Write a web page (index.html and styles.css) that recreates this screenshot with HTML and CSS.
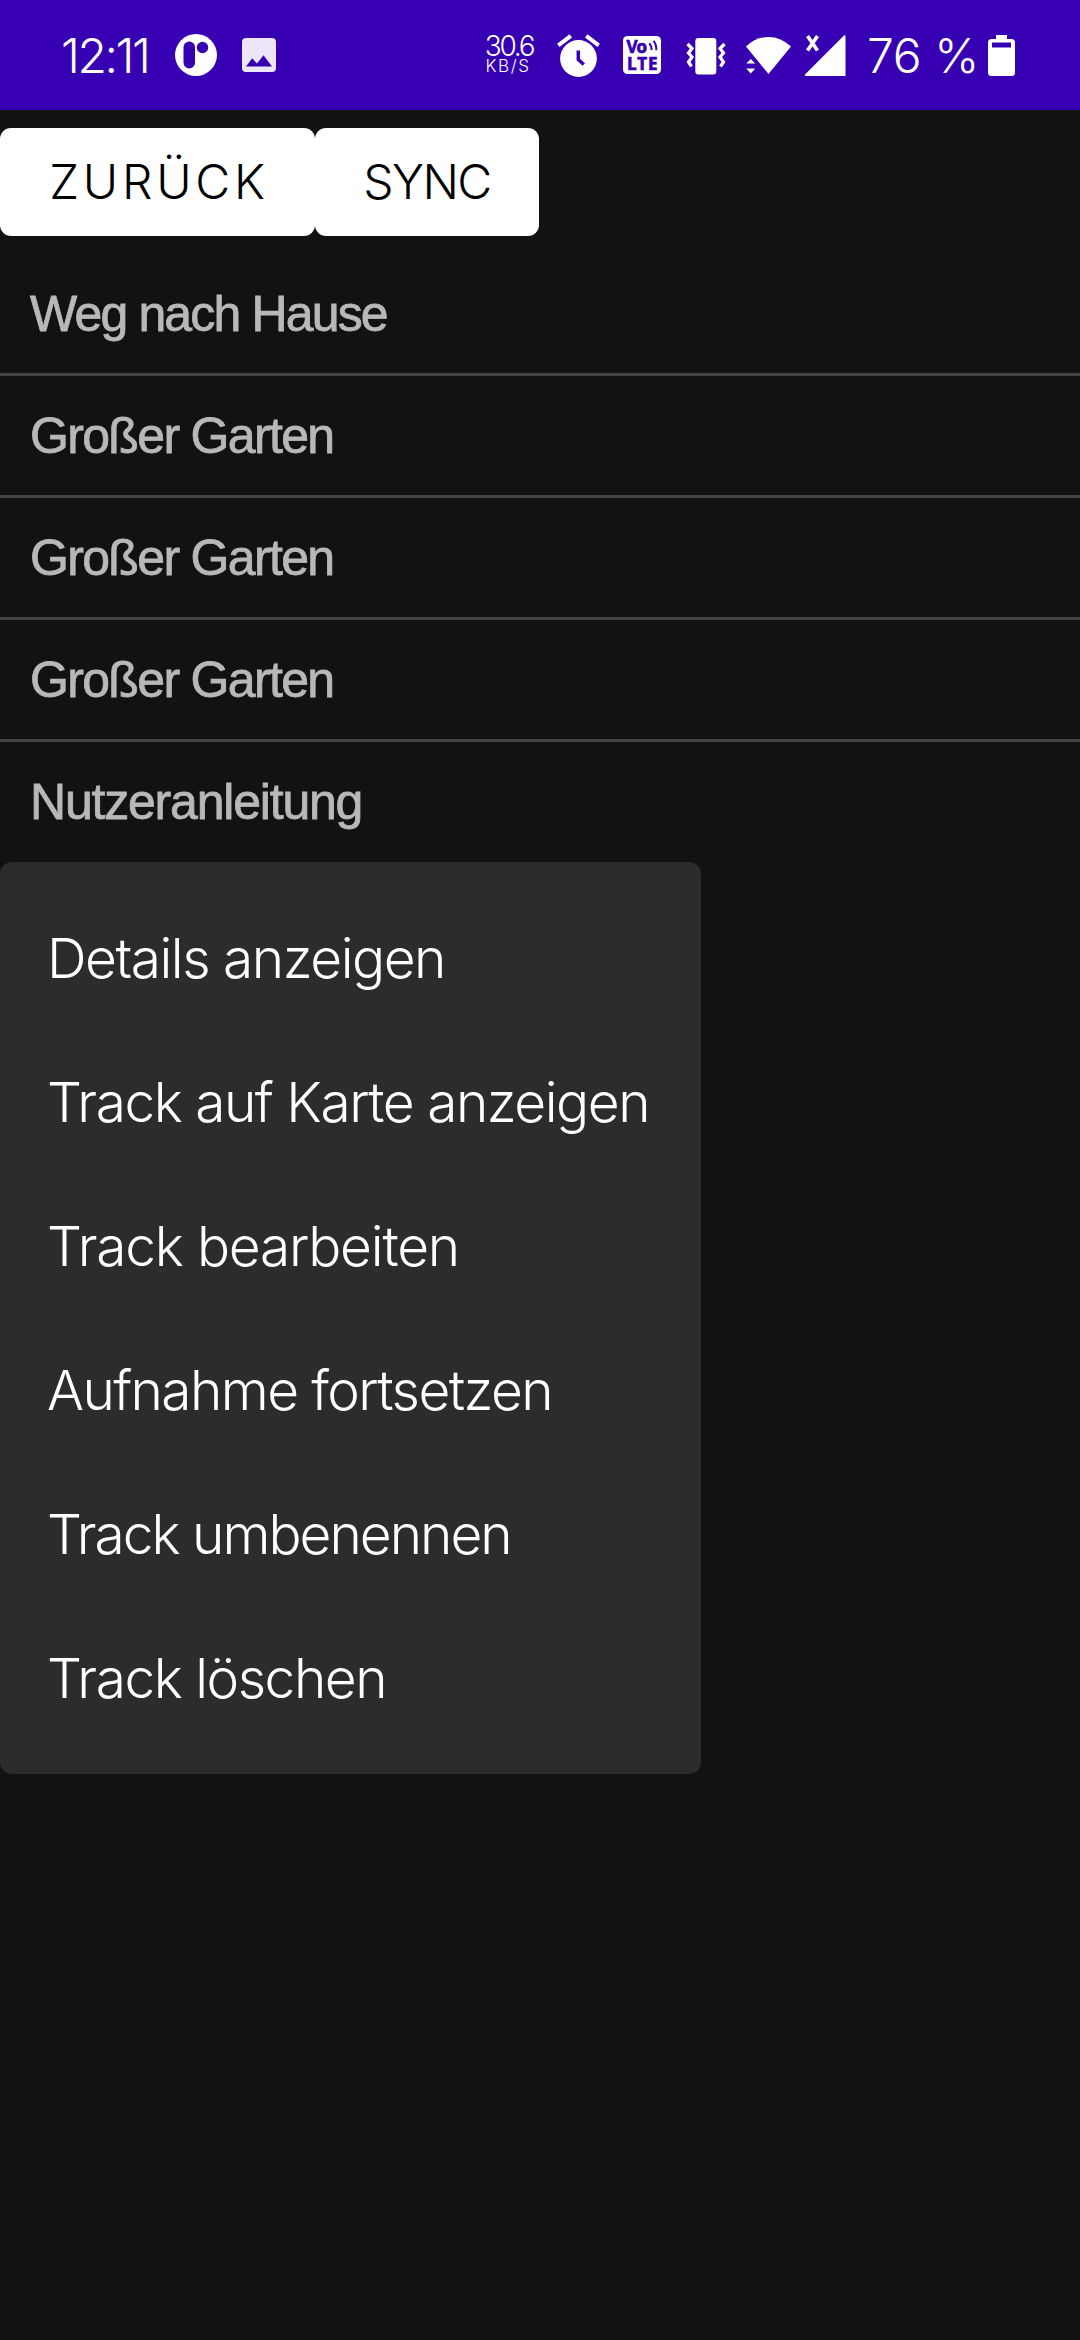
FILE: index.html
```
<!DOCTYPE html>
<html lang="de">
<head>
<meta charset="utf-8">
<title>Tracks</title>
<link rel="stylesheet" href="styles.css">
</head>
<body>
<header class="status-bar">
  <span class="clock">12:11</span>
  <svg class="icon icon-app" width="42" height="42" viewBox="0 0 42 42"><circle cx="21" cy="21" r="21" fill="#fff"/><rect x="8.5" y="7.5" width="11.5" height="27" rx="5.75" fill="#3700b3"/><circle cx="27.5" cy="13.5" r="5.7" fill="#3700b3"/></svg>
  <svg class="icon icon-image" width="34" height="34" viewBox="0 0 34 34"><path fill="#ece6f8" fill-rule="evenodd" d="M4 0H30Q34 0 34 4V30Q34 34 30 34H4Q0 34 0 30V4Q0 0 4 0ZM4 28.5H30L21.5 17.3L15 25.5L10.2 20.2Z"/></svg>
  <span class="net"><span class="net-value">30.6</span><span class="net-unit">KB/S</span></span>
  <svg class="icon icon-alarm" width="43" height="43" viewBox="0 0 43 43"><circle cx="21.5" cy="24.5" r="18.4" fill="#fff"/><path d="M1.3 11.3L13.8 1.8M41.7 11.3L29.2 1.8" stroke="#fff" stroke-width="4"/><path d="M21.3 16.5V25.5L26.8 30.5" fill="none" stroke="#3700b3" stroke-width="3.5"/></svg>
  <svg class="icon icon-volte" width="38" height="38" viewBox="0 0 38 38"><rect width="38" height="38" rx="4.5" fill="#fff"/><g class="volte-text"><text x="3.5" y="17.3" textLength="20.5">Vo</text><text x="4" y="34.3" textLength="30.5">LTE</text></g><path d="M26.3 7.2Q28.6 9.7 28.6 14M30.6 4.8Q33.6 8.6 33.3 14.2" fill="none" stroke="#3700b3" stroke-width="2"/></svg>
  <svg class="icon icon-vibrate" width="40" height="37" viewBox="0 0 40 37"><rect x="9.3" y="0" width="21" height="36.5" rx="3" fill="#fff"/><path d="M1.5 6L6 10.5L2.500 15L6 19L2.500 24L5.500 28.500M38.500 6L34 10.500L37.500 15L34 19L37.500 24L34.500 28.500" fill="none" stroke="#fff" stroke-width="3.2"/></svg>
  <svg class="icon icon-wifi" width="45" height="37" viewBox="0 0 45 37"><path fill="#fff" d="M0 9.500Q10 0 22.500 0T45 9.500L22.500 37L9 20.500Z"/><path fill="#fff" d="M.3 26.500L4.700 22L9.300 26.500ZM.3 31.500H9.300L4.700 36.500Z"/></svg>
  <svg class="icon icon-signal" width="41" height="41" viewBox="0 0 41 41"><path d="M0 39.500L39 .5Q40.500-.5 40.500 1.500V41H1Q-.5 41 0 39.500Z" fill="#fff"/><path d="M2.500 1L12.500 15.500M12.500 1L2.500 15.500" stroke="#fff" stroke-width="3.600"/></svg>
  <span class="percent">76 %</span>
  <svg class="icon icon-battery" width="27" height="41" viewBox="0 0 27 41"><path fill="#fff" fill-rule="evenodd" d="M8 0H19V4H23.500Q27 4 27 7.500V37.500Q27 41 23.500 41H3.500Q0 41 0 37.500V7.500Q0 4 3.500 4H8ZM4 7.500V12.500H23V7.500Z"/></svg>
</header>
<main>
  <div class="toolbar">
    <button class="btn btn-back">ZURÜCK</button>
    <button class="btn btn-sync">SYNC</button>
  </div>
  <ul class="tracks">
    <li class="track way-home">Weg nach Hause</li>
    <li class="track">Großer Garten</li>
    <li class="track">Großer Garten</li>
    <li class="track">Großer Garten</li>
    <li class="track manual">Nutzeranleitung</li>
  </ul>
  <ul class="menu">
    <li class="menu-item">Details anzeigen</li>
    <li class="menu-item">Track auf Karte anzeigen</li>
    <li class="menu-item edit">Track bearbeiten</li>
    <li class="menu-item resume">Aufnahme fortsetzen</li>
    <li class="menu-item rename">Track umbenennen</li>
    <li class="menu-item">Track löschen</li>
  </ul>
</main>
</body>
</html>
```
FILE: styles.css
```
* { box-sizing: border-box; }

body {
  margin: 0;
  min-height: 2340px;
  background: #121212;
  color: #fff;
  font-family: Inter, "Liberation Sans", sans-serif;
  font-weight: 300;
}

ul { margin: 0; padding: 0; list-style: none; }

/* Status bar */
.status-bar {
  display: flex;
  align-items: center;
  height: 110px;
  padding-left: 61px;
  background: #3700b3;
  white-space: nowrap;
}
.status-bar > * { flex: none; }
.clock { width: 114px; font-size: 48px; letter-spacing: -2.45px; }
.icon { display: block; overflow: visible; }
.icon-image { margin-left: 25px; }
.net {
  display: flex;
  flex-direction: column;
  align-items: center;
  width: 54px;
  margin: 0 0 0 205px;
}
.net-value { font-size: 28px; line-height: 22px; letter-spacing: -2.3px; margin-right: -2px; }
.net-unit { font-size: 17px; line-height: 18px; letter-spacing: 1.6px; }
.icon-alarm { margin-left: 22px; }
.icon-volte { margin-left: 23px; }
.icon-vibrate { margin: 2px 0 0 25px; }
.icon-wifi { margin-left: 20px; }
.icon-signal { margin-left: 14px; }
.percent { width: 121px; margin-left: 21px; font-size: 48px; letter-spacing: -0.4px; }
.volte-text { font: 700 17px "Open Sans", sans-serif; fill: #3700b3; stroke: #3700b3; stroke-width: 0.7px; }

/* Toolbar */
.toolbar { display: flex; padding: 18px 0; }
.btn {
  height: 108px;
  padding: 0 0 2px;
  border: 0;
  border-radius: 11px;
  background: #fff;
  color: #000;
  font: 300 48px Inter, sans-serif;
  white-space: nowrap;
}
.btn-back { width: 315px; padding-left: 3px; letter-spacing: 3.8px; }
.btn-sync { width: 224px; letter-spacing: -1.58px; }

/* Track list */
.track {
  height: 122px;
  padding-left: 30px;
  border-bottom: 3px solid #444;
  color: #b8b8b8;
  font: 400 50px/120px "Liberation Sans", sans-serif;
  letter-spacing: -1.66px;
  -webkit-text-stroke: 0.8px #b8b8b8;
}
.way-home { letter-spacing: -1.85px; }
.manual { height: 120px; border-bottom: 0; letter-spacing: -1.2px; }

/* Context menu */
.menu {
  width: 701px;
  padding: 24px 0;
  border-radius: 12px;
  background: #2c2c2c;
}
.menu-item {
  height: 144px;
  padding-left: 47px;
  font-size: 55px;
  line-height: 144px;
  letter-spacing: -1.48px;
  white-space: nowrap;
}
.edit { letter-spacing: -1.2px; }
.resume { letter-spacing: -1.6px; }
.rename { letter-spacing: -2px; }
```
